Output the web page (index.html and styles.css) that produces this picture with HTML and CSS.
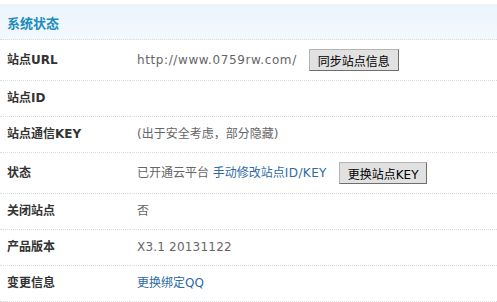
FILE: index.html
```html
<!DOCTYPE html>
<html>
<head>
<meta charset="utf-8">
<link rel="stylesheet" href="styles.css">
</head>
<body>
<div class="page">
<table class="tb">
  <tr class="hd"><th colspan="2">系统状态</th></tr>
  <tr class="btnrow"><td class="lbl">站点URL</td><td class="val"><span class="url">http://www.0759rw.com/</span> <button class="btn">同步站点信息</button></td></tr>
  <tr><td class="lbl">站点ID</td><td class="val"></td></tr>
  <tr><td class="lbl">站点通信KEY</td><td class="val">(出于安全考虑，部分隐藏)</td></tr>
  <tr class="btnrow"><td class="lbl">状态</td><td class="val">已开通云平台 <a class="lnk" href="#">手动修改站点<span class="latin">ID/KEY</span></a> <button class="btn">更换站点KEY</button></td></tr>
  <tr><td class="lbl">关闭站点</td><td class="val">否</td></tr>
  <tr><td class="lbl">产品版本</td><td class="val"><span class="ver">X3.1 20131122</span></td></tr>
  <tr><td class="lbl">变更信息</td><td class="val"><a class="lnk" href="#">更换绑定QQ</a></td></tr>
</table>
<div class="foot"></div>
</div>
</body>
</html>
```
FILE: styles.css
```css
html, body {
  margin: 0;
  padding: 0;
  background: #fff;
}
.page {
  padding-top: 4px;
  font-family: "DejaVu Sans", "Noto Sans CJK SC", sans-serif;
  font-size: 12px;
}
.tb {
  width: 100%;
  border-collapse: collapse;
}
.tb th, .tb td {
  text-align: left;
  padding: 0 7px;
  border-bottom: 1px dotted #d6dde2;
  vertical-align: middle;
}
.hd th {
  height: 34px;
  padding-top: 1px;
  background: linear-gradient(#ebf4fc, #f3f8fd);
  color: #1a8cbb;
  font-weight: bold;
  font-family: "Noto Sans CJK SC", sans-serif;
  font-size: 13px;
}
.tb td {
  height: 35px;
  line-height: 17px;
}
.btnrow td {
  height: 40px;
}
.lbl {
  width: 116px;
  color: #333;
  font-weight: bold;
  font-family: "DejaVu Sans", "Noto Sans CJK SC", sans-serif;
}
.val {
  color: #666;
  font-size: 12px;
}
.url {
  letter-spacing: 0.6px;
}
.ver {
  letter-spacing: 0.2px;
}
.latin {
  letter-spacing: 0.4px;
}
.lnk {
  color: #2e6aa3;
  text-decoration: none;
}
.btn {
  margin-left: 8px;
  height: 22px;
  padding: 0 8px;
  font-family: "DejaVu Sans", "Noto Sans CJK SC", sans-serif;
  font-size: 12px;
  color: #000;
  background: #e1e1e1;
  border: 1px solid;
  border-color: #b4b4b4 #6e6e6e #6e6e6e #b4b4b4;
  vertical-align: middle;
}
.foot {
  height: 4px;
  background: #edf5fc;
}
```
